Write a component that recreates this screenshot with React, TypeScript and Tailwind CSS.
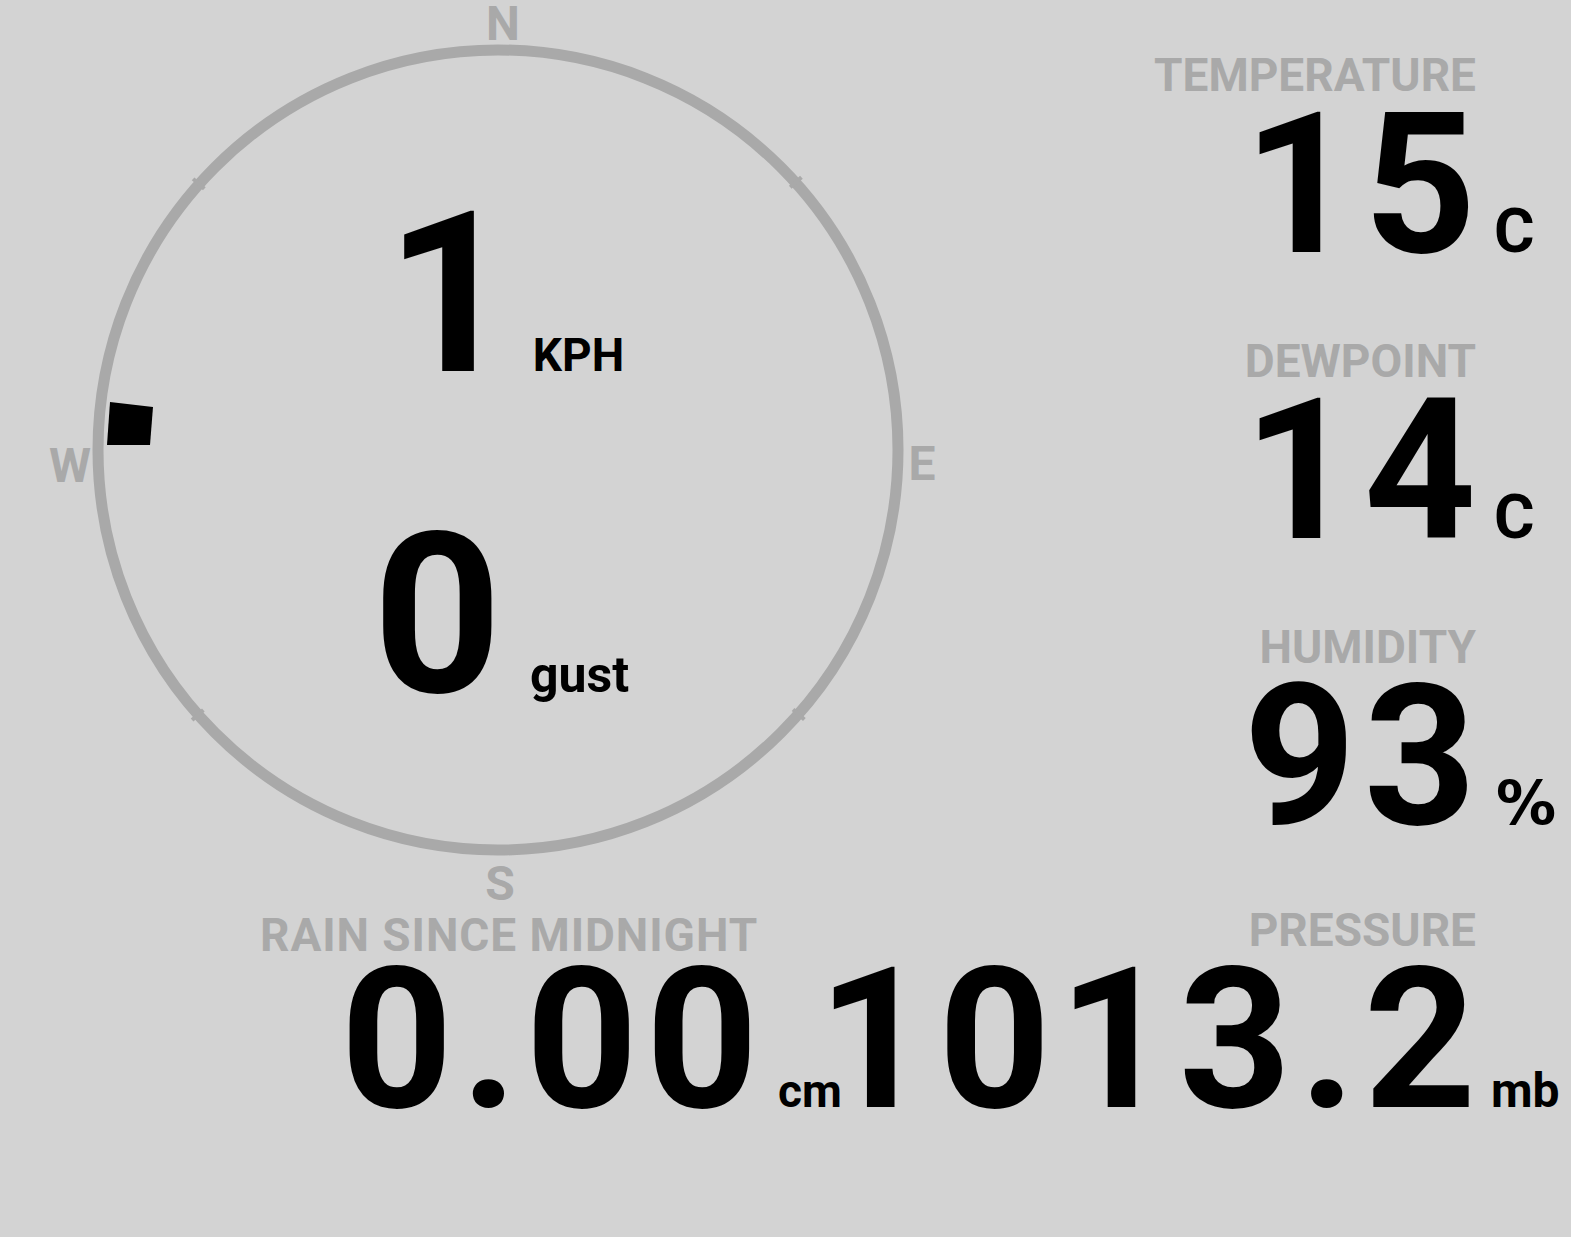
type StatProps = {
  label: string;
  value: string;
  unit: string;
  unitClass: string;
  labelClass?: string;
  valueClass?: string;
};

function Stat({ label, value, unit, unitClass, labelClass = "", valueClass = "mt-3" }: StatProps) {
  return (
    <div className="flex flex-col items-end">
      <div className={`text-[46px] leading-[46px] font-bold text-[#a9a9a9] whitespace-nowrap ${labelClass}`}>
        {label}
      </div>
      <div className={`flex items-baseline ${valueClass}`}>
        <span className="text-[196px] leading-[150px] font-bold text-black tracking-[0.04em] -mr-[8px]">
          {value}
        </span>
        <span className="w-0 min-w-0 whitespace-nowrap">
          <span className={`font-bold text-black ${unitClass}`}>{unit}</span>
        </span>
      </div>
    </div>
  );
}

function Compass() {
  const ticks = [
    [-298, -265],
    [297, -267],
    [-298, 263],
    [299, 263],
  ];
  return (
    <div className="relative w-[996px] h-[904px] shrink-0">
      <svg className="absolute inset-0 overflow-visible" width="996" height="904" viewBox="0 0 996 904">
        <circle cx="498" cy="450" r="400" fill="none" stroke="#a9a9a9" strokeWidth="11" />
        {ticks.map(([dx, dy], i) => {
          const len = Math.hypot(dx, dy);
          const ux = dx / len;
          const uy = dy / len;
          return (
            <line
              key={i}
              x1={498 + ux * 393}
              y1={450 + uy * 393}
              x2={498 + ux * 408}
              y2={450 + uy * 408}
              stroke="#a9a9a9"
              strokeWidth="4"
            />
          );
        })}
        <polygon points="110,402 153,407 150,445 107,445" fill="#000" />
        <g fill="#a9a9a9" fontFamily="Roboto, sans-serif" fontWeight="700" fontSize="48">
          <text x="503" y="40" textAnchor="middle">N</text>
          <text x="500" y="900" textAnchor="middle">S</text>
          <text x="922" y="480" textAnchor="middle">E</text>
          <text x="70" y="482" textAnchor="middle">W</text>
        </g>
      </svg>
      <div className="relative flex flex-col items-center">
        <div className="mt-[182px] ml-[14px] flex items-baseline">
          <span className="text-[225px] leading-none font-bold text-black">1</span>
          <span className="ml-[18px] text-[46px] leading-none font-bold text-black">KPH</span>
        </div>
        <div className="mt-[96px] ml-[6px] flex items-baseline">
          <span className="text-[225px] leading-none font-bold text-black">0</span>
          <span className="ml-[28px] text-[50px] leading-none font-bold text-black">gust</span>
        </div>
      </div>
    </div>
  );
}

export default function App() {
  return (
    <div className="w-[1571px] h-[1237px] overflow-hidden bg-[#d3d3d3] font-['Roboto','Liberation_Sans',sans-serif]">
      <div className="flex h-[904px]">
        <Compass />
        <div className="flex-1 flex flex-col items-end gap-[61px] pt-[52px] pr-[95px]">
          <Stat label="TEMPERATURE" value="15" unit="C" unitClass="ml-[18px] text-[62px]" />
          <Stat label="DEWPOINT" value="14" unit="C" unitClass="ml-[18px] text-[62px]" />
          <Stat
            label="HUMIDITY"
            value="93"
            unit="%"
            unitClass="ml-[20px] text-[60px] font-['DejaVu_Sans',sans-serif]"
          />
        </div>
      </div>
      <div className="flex items-start justify-between pt-[3px] pl-[260px] pr-[95px]">
        <Stat
          label="RAIN SINCE MIDNIGHT"
          value="0.00"
          unit="cm"
          unitClass="ml-[20px] text-[46px]"
          labelClass="mt-[5px] tracking-[0.02em]"
          valueClass="mt-[7px]"
        />
        <Stat
          label="PRESSURE"
          value="1013.2"
          unit="mb"
          unitClass="ml-[15px] text-[48px]"
          valueClass="mt-[12px]"
        />
      </div>
    </div>
  );
}
